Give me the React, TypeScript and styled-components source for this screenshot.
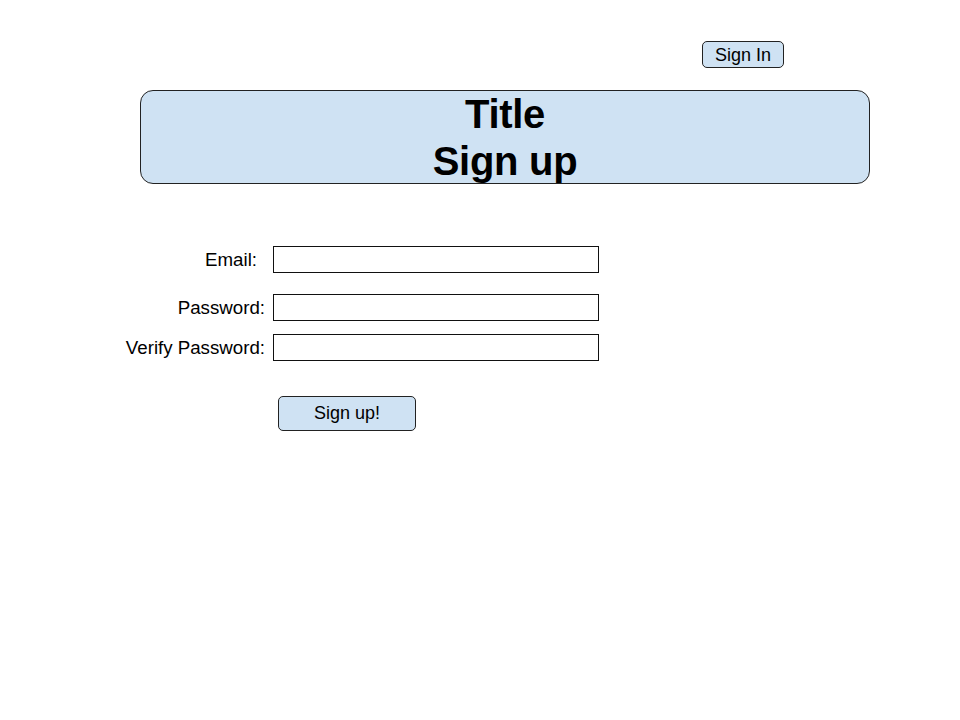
import styled, { createGlobalStyle } from "styled-components";

const GlobalStyle = createGlobalStyle`
  html, body {
    margin: 0;
    padding: 0;
    background: #ffffff;
  }
  body {
    font-family: "Liberation Sans", Arial, sans-serif;
    color: #000;
  }
`;

const Page = styled.div`
  width: 960px;
  height: 720px;
  box-sizing: border-box;
  padding-top: 41px;
`;

const TopBar = styled.div`
  display: flex;
  justify-content: flex-end;
  padding-right: 176px;
`;

const SignInButton = styled.button`
  width: 82px;
  height: 27px;
  box-sizing: border-box;
  border: 1px solid #222;
  border-radius: 5px;
  background: #cfe2f3;
  font-family: "Liberation Sans", Arial, sans-serif;
  font-size: 18px;
  line-height: 27px;
  padding: 0;
  color: #000;
  cursor: pointer;
`;

const Banner = styled.header`
  width: 730px;
  height: 94px;
  box-sizing: border-box;
  margin: 22px 0 0 140px;
  border: 1px solid #222;
  border-radius: 13px;
  background: #cfe2f3;
  text-align: center;
  font-size: 40px;
  font-weight: bold;
  line-height: 47px;
  letter-spacing: -0.3px;
`;

const Form = styled.form`
  display: flex;
  flex-direction: column;
  margin-top: 62px;
`;

const Row = styled.div<{ $gap: number }>`
  display: grid;
  grid-template-columns: 265px 326px;
  column-gap: 8px;
  align-items: center;
  margin-top: ${(p) => p.$gap}px;
`;

const Label = styled.label<{ $inset?: number }>`
  text-align: right;
  font-size: 18.7px;
  white-space: nowrap;
  padding-right: ${(p) => p.$inset ?? 0}px;
`;

const Input = styled.input`
  width: 326px;
  height: 27px;
  box-sizing: border-box;
  border: 1px solid #111;
  border-radius: 0;
  padding: 0 4px;
  margin: 0;
  font-size: 16px;
  font-family: "Liberation Sans", Arial, sans-serif;
  &:focus {
    outline: none;
  }
`;

const Actions = styled.div`
  padding-left: 278px;
  margin-top: 35px;
`;

const SubmitButton = styled.button`
  width: 138px;
  height: 35px;
  box-sizing: border-box;
  border: 1px solid #222;
  border-radius: 5px;
  background: #cfe2f3;
  font-family: "Liberation Sans", Arial, sans-serif;
  font-size: 18px;
  padding: 0;
  color: #000;
  cursor: pointer;
`;

export default function App() {
  return (
    <>
      <GlobalStyle />
      <Page>
        <TopBar>
          <SignInButton type="button">Sign In</SignInButton>
        </TopBar>
        <Banner>
          Title
          <br />
          Sign up
        </Banner>
        <Form onSubmit={(e) => e.preventDefault()}>
          <Row $gap={0}>
            <Label htmlFor="email" $inset={8}>Email:</Label>
            <Input id="email" type="email" />
          </Row>
          <Row $gap={21}>
            <Label htmlFor="password">Password:</Label>
            <Input id="password" type="password" />
          </Row>
          <Row $gap={13}>
            <Label htmlFor="verify">Verify Password:</Label>
            <Input id="verify" type="password" />
          </Row>
          <Actions>
            <SubmitButton type="submit">Sign up!</SubmitButton>
          </Actions>
        </Form>
      </Page>
    </>
  );
}
